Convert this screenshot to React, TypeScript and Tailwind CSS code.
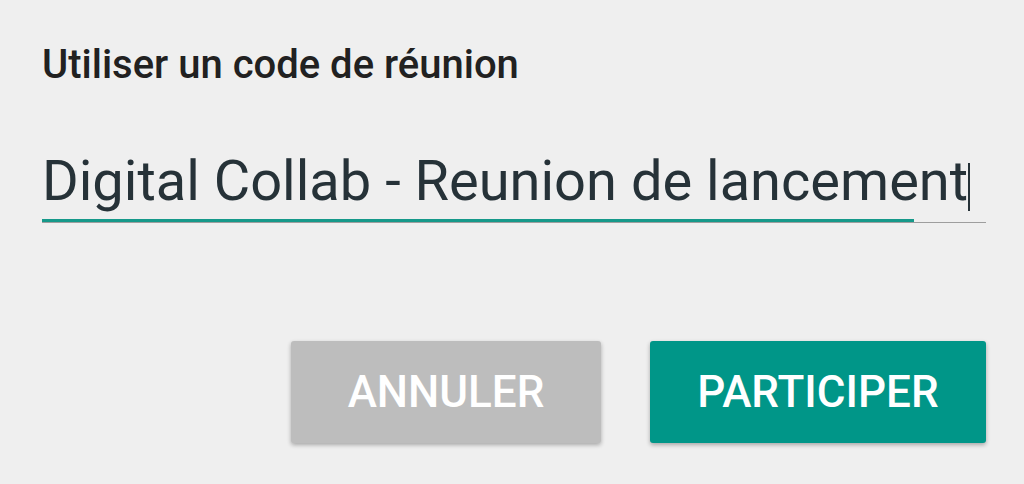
export default function App() {
  return (
    <div className="w-[1024px] h-[484px] bg-[#efefef] overflow-hidden font-['Roboto',sans-serif]">
      <div className="pl-[42px] pr-[38px] pt-[39px]">
        <h1 className="text-[40px] leading-[52px] font-medium text-[#212121] whitespace-nowrap">
          Utiliser un code de réunion
        </h1>
        <div className="mt-[58px]">
          <div className="flex items-end h-[64px]">
            <span className="text-[56px] leading-[64px] text-[#263238] whitespace-nowrap">
              Digital Collab - Reunion de lancement
            </span>
            <span className="w-[2px] h-[48px] mb-[2px] bg-[#263238]" />
          </div>
          <div className="mt-[6px] h-[4px] border-b border-[#9e9e9e]">
            <div className="w-[872px] h-[3px] bg-[#16998a]" />
          </div>
        </div>
        <div className="mt-[118px] flex justify-end gap-[49px]">
          <button className="w-[310px] h-[102px] rounded-[3px] bg-[#bdbdbd] text-white text-[44px] font-medium shadow-[0_2px_4px_rgba(0,0,0,0.3)]">
            ANNULER
          </button>
          <button className="w-[336px] h-[102px] rounded-[3px] bg-[#009688] text-white text-[44px] font-medium shadow-[0_2px_4px_rgba(0,0,0,0.3)]">
            PARTICIPER
          </button>
        </div>
      </div>
    </div>
  )
}
